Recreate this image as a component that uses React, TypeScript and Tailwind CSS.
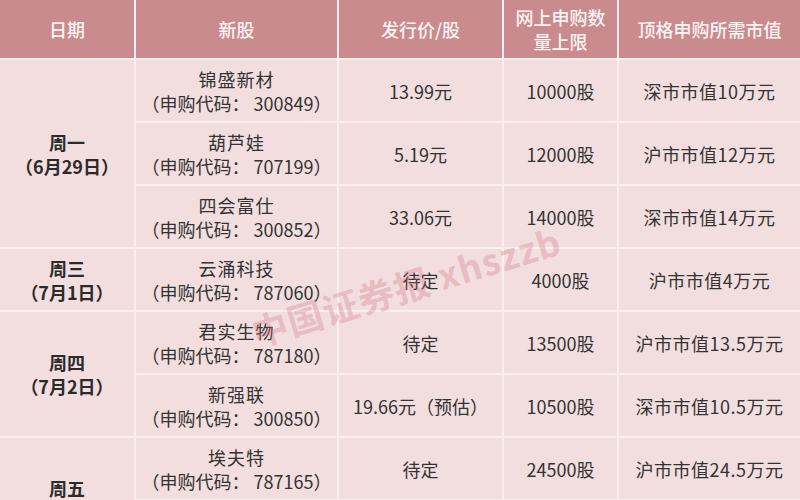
import React from 'react';

type Stock = { name: string; code: string; price: string; limit: string; value: string };

const groups: { day: string; date: string; stocks: Stock[] }[] = [
  {
    day: '周一',
    date: '（6月29日）',
    stocks: [
      { name: '锦盛新材', code: '300849', price: '13.99元', limit: '10000股', value: '深市市值10万元' },
      { name: '葫芦娃', code: '707199', price: '5.19元', limit: '12000股', value: '沪市市值12万元' },
      { name: '四会富仕', code: '300852', price: '33.06元', limit: '14000股', value: '深市市值14万元' }
    ]
  },
  {
    day: '周三',
    date: '（7月1日）',
    stocks: [{ name: '云涌科技', code: '787060', price: '待定', limit: '4000股', value: '沪市市值4万元' }]
  },
  {
    day: '周四',
    date: '（7月2日）',
    stocks: [
      { name: '君实生物', code: '787180', price: '待定', limit: '13500股', value: '沪市市值13.5万元' },
      { name: '新强联', code: '300850', price: '19.66元（预估）', limit: '10500股', value: '深市市值10.5万元' }
    ]
  },
  {
    day: '周五',
    date: '（7月3日）',
    stocks: [
      { name: '埃夫特', code: '787165', price: '待定', limit: '24500股', value: '沪市市值24.5万元' },
      { name: '', code: '', price: '', limit: '', value: '' }
    ]
  }
];

const spans: Record<number, string> = {
  1: 'row-span-1',
  2: 'row-span-2',
  3: 'row-span-3'
};

const cell = 'bg-[#f2dedf] flex flex-col items-center justify-center text-center';

export default function App() {
  return (
    <div
      className="relative h-[500px] w-[800px] overflow-hidden bg-[#fbeeee] text-[18px] leading-[24px] text-[#333333]"
      style={{ fontFamily: '"Noto Sans CJK SC", "Noto Sans", sans-serif' }}
    >
      <div className="grid grid-cols-[134px_201px_163px_113px_181px] grid-rows-[58px_repeat(9,61px)] gap-[2px]">
        {/* header */}
        {['日期', '新股', '发行价/股', '网上申购数量上限', '顶格申购所需市值'].map((h, i) => (
          <div
            key={i}
            className={`flex items-center justify-center bg-[#c98b8e] text-center font-medium text-[#fff4f4] ${i === 3 ? 'px-[10px]' : ''}`}
          >
            {h}
          </div>
        ))}

        {groups.map((g) => (
          <React.Fragment key={g.day}>
            <div className={`${cell} ${spans[g.stocks.length]} font-bold text-[#2b2b2b]`}>
              <div>{g.day}</div>
              <div>{g.date}</div>
            </div>
            {g.stocks.map((s, i) => (
              <React.Fragment key={i}>
                <div className={cell}>
                  {s.name && (
                    <>
                      <div className="tracking-[1px]">{s.name}</div>
                      <div>（申购代码： {s.code}）</div>
                    </>
                  )}
                </div>
                <div className={cell}>{s.price}</div>
                <div className={cell}>{s.limit}</div>
                <div className={`${cell} tracking-[0.5px]`}>{s.value}</div>
              </React.Fragment>
            ))}
          </React.Fragment>
        ))}
      </div>

      {/* watermark */}
      <div className="pointer-events-none absolute left-[252px] top-[312px] origin-left rotate-[-17deg] whitespace-nowrap text-[36px] font-bold leading-[40px] tracking-[1px] text-[#d06a78]/30">
        中国证券报 xhszzb
      </div>
    </div>
  );
}
